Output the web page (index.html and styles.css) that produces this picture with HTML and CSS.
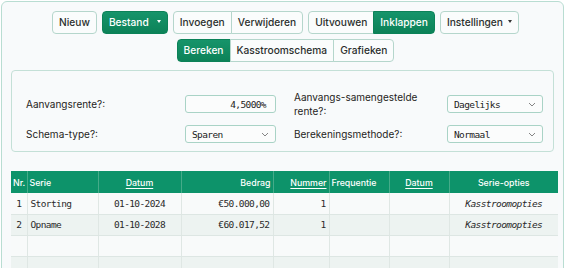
FILE: index.html
```html
<!DOCTYPE html>
<html>
<head>
<meta charset="utf-8">
<link rel="stylesheet" href="styles.css">
</head>
<body>
<div class="app">
  <div class="toolbar">
    <div class="row">
      <button class="btn">Nieuw</button>
      <button class="btn primary">Bestand <span class="caret"></span></button>
      <div class="group">
        <button class="btn">Invoegen</button>
        <button class="btn">Verwijderen</button>
      </div>
      <div class="group">
        <button class="btn">Uitvouwen</button>
        <button class="btn primary">Inklappen</button>
      </div>
      <button class="btn">Instellingen <span class="caret dark"></span></button>
    </div>
    <div class="row">
      <div class="group">
        <button class="btn primary">Bereken</button>
        <button class="btn">Kasstroomschema</button>
        <button class="btn">Grafieken</button>
      </div>
    </div>
  </div>

  <div class="panel">
    <div class="field">
      <label>Aanvangsrente?:</label>
      <div class="input num">4,5000%</div>
    </div>
    <div class="field">
      <label>Aanvangs-samengestelde<br>rente?:</label>
      <div class="input select wide">Dagelijks <svg class="chev" viewBox="0 0 8 5"><path d="M1 1l3 3 3-3" fill="none" stroke="#777" stroke-width="0.9"/></svg></div>
    </div>
    <div class="field">
      <label>Schema-type?:</label>
      <div class="input select">Sparen <svg class="chev" viewBox="0 0 8 5"><path d="M1 1l3 3 3-3" fill="none" stroke="#777" stroke-width="0.9"/></svg></div>
    </div>
    <div class="field">
      <label>Berekeningsmethode?:</label>
      <div class="input select wide">Normaal <svg class="chev" viewBox="0 0 8 5"><path d="M1 1l3 3 3-3" fill="none" stroke="#777" stroke-width="0.9"/></svg></div>
    </div>
  </div>

  <table class="grid">
    <colgroup>
      <col class="c-nr"><col class="c-serie"><col class="c-datum"><col class="c-bedrag"><col class="c-nummer"><col class="c-freq"><col class="c-datum2"><col>
    </colgroup>
    <thead>
      <tr>
        <th class="l">Nr.</th>
        <th class="l">Serie</th>
        <th><u>Datum</u></th>
        <th class="r">Bedrag</th>
        <th class="r"><u>Nummer</u></th>
        <th class="l">Frequentie</th>
        <th><u>Datum</u></th>
        <th>Serie-opties</th>
      </tr>
    </thead>
    <tbody>
      <tr>
        <td class="c">1</td><td>Storting</td><td class="c">01-10-2024</td><td class="r">€50.000,00</td><td class="r">1</td><td></td><td></td><td class="c it">Kasstroomopties</td>
      </tr>
      <tr class="alt">
        <td class="c">2</td><td>Opname</td><td class="c">01-10-2028</td><td class="r">€60.017,52</td><td class="r">1</td><td></td><td></td><td class="c it">Kasstroomopties</td>
      </tr>
      <tr>
        <td></td><td></td><td></td><td></td><td></td><td></td><td></td><td></td>
      </tr>
      <tr class="alt">
        <td></td><td></td><td></td><td></td><td></td><td></td><td></td><td></td>
      </tr>
    </tbody>
  </table>
</div>
</body>
</html>
```

FILE: styles.css
```css
* { box-sizing: border-box; }
html, body { margin: 0; padding: 0; background: #ffffff; }
body {
  font-family: Inter, "Noto Sans", sans-serif;
  color: #222;
  overflow: hidden;
}
.app {
  margin: 1px 0 0 1px;
  width: 563px;
  height: 300px;
  border: 1px solid #b9ddd2;
  border-radius: 6px;
  background: #f8fafb;
  padding: 9px 9px 0 9px;
}
.toolbar {
  display: flex;
  flex-direction: column;
  align-items: center;
  gap: 5px;
  padding-left: 6px;
}
.row {
  display: flex;
  gap: 5px;
  align-items: center;
}
.btn {
  font-family: Inter, sans-serif;
  font-size: 10.2px;
  font-weight: 500;
  height: 23px;
  padding: 0 6px;
  border: 1px solid #b5d6cc;
  background: #fafcfc;
  color: #2a2f2d;
  border-radius: 4px;
  display: inline-flex;
  align-items: center;
  line-height: 1;
}
.btn.primary {
  background: linear-gradient(#16946a, #0c8258);
  border-color: #0c8258;
  color: #fff;
}
.caret {
  display: inline-block;
  width: 0; height: 0;
  border-left: 2.5px solid transparent;
  border-right: 2.5px solid transparent;
  border-top: 3px solid #fff;
  margin-left: 8px;
  margin-top: -2px;
}
.caret.dark { border-top-color: #333; margin-left: 5px; }
.group { display: flex; }
.group .btn { border-radius: 0; margin-left: -1px; }
.group .btn:first-child { border-radius: 4px 0 0 4px; margin-left: 0; }
.group .btn:last-child { border-radius: 0 4px 4px 0; }

.panel {
  margin-top: 8px;
  height: 82px;
  border: 1px solid #c4e0d7;
  border-radius: 4px;
  background: #f8fafb;
  display: grid;
  grid-template-columns: 268px 1fr;
  padding: 18px 13px 0 14px;
  align-content: start;
}
.field {
  display: flex;
  align-items: center;
  height: 30px;
  font-size: 10px;
}
.field label {
  width: 159px;
  line-height: 14px;
  color: #1f2422;
}
.field:nth-child(even) label { width: 153px; }
.input {
  width: 91px;
  height: 18px;
  border: 1px solid #a9d3c6;
  border-radius: 3px;
  background: #fbfcfc;
  font-family: "DejaVu Sans Mono", monospace;
  font-size: 9.5px;
  letter-spacing: -0.6px;
  display: flex;
  align-items: center;
  padding: 0 6px;
  color: #222;
}
.input.num { justify-content: flex-end; padding-right: 9px; }
.input.select { justify-content: space-between; }
.input.wide { width: 96px; }
.chev { width: 8px; height: 5px; }

.grid {
  margin-top: 19px;
  width: 547px;
  border-collapse: collapse;
  table-layout: fixed;
}
.c-nr { width: 16px; }
.c-serie { width: 71px; }
.c-datum { width: 83px; }
.c-bedrag { width: 92px; }
.c-nummer { width: 56px; }
.c-freq { width: 60px; }
.c-datum2 { width: 60px; }
.grid th {
  background: #0d936a;
  color: #fff;
  font-size: 8.8px;
  font-weight: 500;
  height: 22px;
  padding: 0 2px;
  border-left: 1px solid #45ab89;
  text-align: center;
  white-space: nowrap;
  overflow: hidden;
}
.grid th.l { text-align: left; }
.grid th.r { text-align: right; }
.grid th:first-child { border-left: none; }
.grid th u { text-decoration-thickness: 1px; text-underline-offset: 2px; }
.grid td {
  height: 21px;
  padding: 0 3px;
  border-left: 1px solid #dfe7e4;
  border-bottom: 1px solid #dde6e3;
  font-family: "DejaVu Sans Mono", monospace;
  font-size: 9.5px;
  letter-spacing: -0.6px;
  color: #2a2a2a;
  white-space: nowrap;
  overflow: hidden;
}
.grid td:first-child { border-left: none; }
.grid tbody tr { background: #f8fafa; }
.grid tbody tr.alt { background: #edf3f1; }
.grid td.c { text-align: center; }
.grid td.r { text-align: right; }
.grid td.it { font-style: italic; }
```
